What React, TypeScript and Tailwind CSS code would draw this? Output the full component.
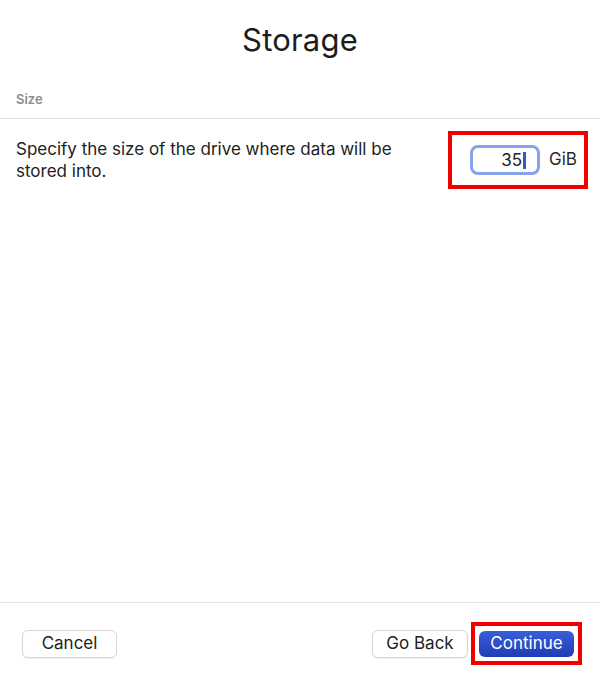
import React from "react";

export default function App() {
  const font = { fontFamily: "Inter, 'Liberation Sans', sans-serif" };
  return (
    <div
      className="w-[600px] h-[678px] bg-white flex flex-col text-[#262626] antialiased"
      style={font}
    >
      <div className="h-[82px] flex items-center justify-center pb-[4px]">
        <h1 className="text-[31px] leading-none font-normal text-[#1d1d1d] tracking-[0.2px]">
          Storage
        </h1>
      </div>
      <div className="h-[37px] px-4 flex items-center border-b border-[#e3e3e3]">
        <span className="text-[13px] font-semibold text-[#8c8c8c]">Size</span>
      </div>
      <div className="flex justify-between items-start pl-4 pr-[12px]">
        <p className="pt-[19px] text-[17px] leading-[22px] text-[#222] w-[410px]">
          Specify the size of the drive where data will be stored into.
        </p>
        <div className="mt-[12px] border-4 border-[#f20000] h-[58px] flex items-center pl-[18px] pr-[7px]">
          <div className="relative w-[70px] h-[30px] rounded-[8px] border-[3.5px] border-[#86a3ec] bg-white flex items-center justify-end pr-[15px]">
            <span className="text-[17px] leading-none text-[#222]">35</span>
            <span className="absolute right-[11px] top-[4px] w-[3px] h-[17px] bg-[#2f5ad6]" />
          </div>
          <span className="ml-[9px] text-[17px] text-[#2a2a2a]">GiB</span>
        </div>
      </div>
      <div className="flex-1" />
      <div className="h-[76px] border-t border-[#e3e3e3] flex items-center pt-[6px] pl-[22px] pr-[18px]">
        <button className="w-[95px] h-[28px] rounded-[6px] bg-white border border-[#d6d6d6] shadow-[0_1px_1px_rgba(0,0,0,0.08)] text-[17px] text-[#222] flex items-center justify-center">
          Cancel
        </button>
        <div className="flex-1" />
        <button className="w-[96px] h-[28px] rounded-[6px] bg-white border border-[#d6d6d6] shadow-[0_1px_1px_rgba(0,0,0,0.08)] text-[17px] text-[#222] flex items-center justify-center">
          Go Back
        </button>
        <div className="ml-[3px] border-4 border-[#f20000] w-[111px] h-[43px] flex items-center justify-center">
          <button className="w-[95px] h-[26px] rounded-[6px] bg-gradient-to-b from-[#3a5ddb] to-[#1f3eb4] text-white text-[17px] flex items-center justify-center">
            Continue
          </button>
        </div>
      </div>
    </div>
  );
}
